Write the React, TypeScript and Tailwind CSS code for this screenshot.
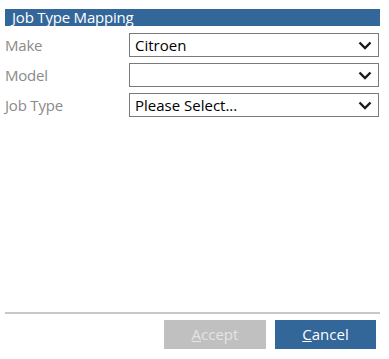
const FIELDS = [
  { label: 'Make', value: 'Citroen' },
  { label: 'Model', value: '' },
  { label: 'Job Type', value: 'Please Select...' },
];

function SelectBox({ value }: { value: string }) {
  return (
    <div className="w-[250px] h-[24px] border border-[#7a7a7a] bg-white flex items-center pl-[5px] pr-[6px]">
      <span className="flex-1 text-[15px] text-black leading-none">{value}</span>
      <svg width="14" height="9" viewBox="0 0 14 9" className="text-[#1a1a1a]">
        <polyline points="1.5,1.5 7,7 12.5,1.5" fill="none" stroke="currentColor" strokeWidth="2.4" />
      </svg>
    </div>
  );
}

export default function App() {
  return (
    <div className="w-[389px] h-[359px] bg-white flex flex-col pl-[5px] pr-[9px] pt-[9px] pb-[10px] font-['Open_Sans','Noto_Sans',sans-serif]">
      <div className="h-[17px] bg-[#336699] text-white text-[15px] leading-[17px] pl-[7px] tracking-[-0.2px]">
        Job Type Mapping
      </div>

      <div className="flex flex-col gap-[6px] mt-[7px]">
        {FIELDS.map((f) => (
          <div key={f.label} className="flex items-center">
            <span className="w-[124px] text-[15px] text-[#8a8a8a] tracking-[-0.2px]">{f.label}</span>
            <SelectBox value={f.value} />
          </div>
        ))}
      </div>

      <div className="flex-1" />

      <div className="border-t-2 border-[#c8c8c8] pt-[6px] flex justify-end gap-[9px] pr-[4px]">
        <button className="w-[102px] h-[29px] bg-[#c0c0c0] text-[#e4e4e4] text-[15px]">
          <span className="underline">A</span>ccept
        </button>
        <button className="w-[101px] h-[29px] bg-[#336699] text-white text-[15px]">
          <span className="underline">C</span>ancel
        </button>
      </div>
    </div>
  );
}
